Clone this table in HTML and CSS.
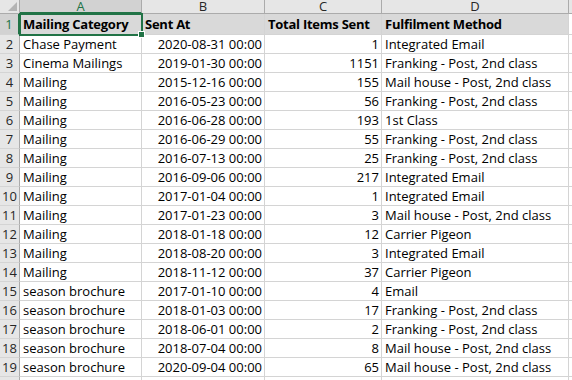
FILE: index.html
```html
<!DOCTYPE html>
<html>
<head>
<meta charset="utf-8">
<link rel="stylesheet" href="styles.css">
</head>
<body>
<div class="sheet">
  <div class="corner"><span class="tri"></span></div>
  <div class="ch sel">A</div><div class="ch">B</div><div class="ch">C</div><div class="ch">D</div><div class="ch"></div>

  <div class="rh sel">1</div>
  <div class="c hd active">Mailing Category<span class="handle"></span></div>
  <div class="c hd">Sent At</div>
  <div class="c hd">Total Items Sent</div>
  <div class="c hd">Fulfilment Method</div>
  <div class="c"></div>

  <div class="rh">2</div><div class="c">Chase Payment</div><div class="c n">2020-08-31 00:00</div><div class="c n">1</div><div class="c">Integrated Email</div><div class="c"></div>
  <div class="rh">3</div><div class="c">Cinema Mailings</div><div class="c n">2019-01-30 00:00</div><div class="c n">1151</div><div class="c">Franking - Post, 2nd class</div><div class="c"></div>
  <div class="rh">4</div><div class="c">Mailing</div><div class="c n">2015-12-16 00:00</div><div class="c n">155</div><div class="c">Mail house - Post, 2nd class</div><div class="c"></div>
  <div class="rh">5</div><div class="c">Mailing</div><div class="c n">2016-05-23 00:00</div><div class="c n">56</div><div class="c">Franking - Post, 2nd class</div><div class="c"></div>
  <div class="rh">6</div><div class="c">Mailing</div><div class="c n">2016-06-28 00:00</div><div class="c n">193</div><div class="c">1st Class</div><div class="c"></div>
  <div class="rh">7</div><div class="c">Mailing</div><div class="c n">2016-06-29 00:00</div><div class="c n">55</div><div class="c">Franking - Post, 2nd class</div><div class="c"></div>
  <div class="rh">8</div><div class="c">Mailing</div><div class="c n">2016-07-13 00:00</div><div class="c n">25</div><div class="c">Franking - Post, 2nd class</div><div class="c"></div>
  <div class="rh">9</div><div class="c">Mailing</div><div class="c n">2016-09-06 00:00</div><div class="c n">217</div><div class="c">Integrated Email</div><div class="c"></div>
  <div class="rh">10</div><div class="c">Mailing</div><div class="c n">2017-01-04 00:00</div><div class="c n">1</div><div class="c">Integrated Email</div><div class="c"></div>
  <div class="rh">11</div><div class="c">Mailing</div><div class="c n">2017-01-23 00:00</div><div class="c n">3</div><div class="c">Mail house - Post, 2nd class</div><div class="c"></div>
  <div class="rh">12</div><div class="c">Mailing</div><div class="c n">2018-01-18 00:00</div><div class="c n">12</div><div class="c">Carrier Pigeon</div><div class="c"></div>
  <div class="rh">13</div><div class="c">Mailing</div><div class="c n">2018-08-20 00:00</div><div class="c n">3</div><div class="c">Integrated Email</div><div class="c"></div>
  <div class="rh">14</div><div class="c">Mailing</div><div class="c n">2018-11-12 00:00</div><div class="c n">37</div><div class="c">Carrier Pigeon</div><div class="c"></div>
  <div class="rh">15</div><div class="c">season brochure</div><div class="c n">2017-01-10 00:00</div><div class="c n">4</div><div class="c">Email</div><div class="c"></div>
  <div class="rh">16</div><div class="c">season brochure</div><div class="c n">2018-01-03 00:00</div><div class="c n">17</div><div class="c">Franking - Post, 2nd class</div><div class="c"></div>
  <div class="rh">17</div><div class="c">season brochure</div><div class="c n">2018-06-01 00:00</div><div class="c n">2</div><div class="c">Franking - Post, 2nd class</div><div class="c"></div>
  <div class="rh">18</div><div class="c">season brochure</div><div class="c n">2018-07-04 00:00</div><div class="c n">8</div><div class="c">Mail house - Post, 2nd class</div><div class="c"></div>
  <div class="rh">19</div><div class="c">season brochure</div><div class="c n">2020-09-04 00:00</div><div class="c n">65</div><div class="c">Mail house - Post, 2nd class</div><div class="c"></div>
  <div class="rh">20</div><div class="c"></div><div class="c"></div><div class="c"></div><div class="c"></div><div class="c"></div>
</div>
</body>
</html>
```
FILE: styles.css
```css
html, body {
  margin: 0;
  padding: 0;
  background: #ffffff;
  overflow: hidden;
}

.sheet {
  display: grid;
  grid-template-columns: 20px 122px 123px 117px 187px 1fr;
  grid-template-rows: 14px 21px repeat(19, 19px);
  width: 100%;
  font-family: "Open Sans", Lato, "Liberation Sans", sans-serif;
  font-size: 13px;
  color: #000000;
}

.corner, .ch, .rh, .c {
  box-sizing: border-box;
  border-right: 1px solid #d4d4d4;
  border-bottom: 1px solid #d4d4d4;
  white-space: nowrap;
  overflow: visible;
}

.corner {
  background: #e6e6e6;
  border-color: #ababab;
  position: relative;
}
.tri {
  position: absolute;
  right: 2px;
  bottom: 2px;
  width: 0;
  height: 0;
  border-left: 9px solid transparent;
  border-bottom: 9px solid #b4b4b4;
}

.ch {
  background: #e6e6e6;
  border-right-color: #ababab;
  border-bottom-color: #ababab;
  color: #262626;
  text-align: center;
  font-size: 13px;
  line-height: 12px;
}
.ch.sel {
  background: #d2d2d2;
  color: #217346;
  border-bottom: 2px solid #217346;
}

.rh {
  background: #e6e6e6;
  border-right-color: #ababab;
  border-bottom-color: #d4d4d4;
  color: #262626;
  text-align: center;
  line-height: 18px;
}
.rh.sel {
  background: #d2d2d2;
  color: #217346;
  border-right: 2px solid #217346;
  line-height: 20px;
}

.c {
  padding: 0 2px 0 3px;
  line-height: 18px;
  overflow: hidden;
}
.c.n {
  text-align: right;
}
.c.hd {
  background: #d9d9d9;
  font-weight: bold;
  letter-spacing: -0.25px;
  line-height: 20px;
  overflow: visible;
}

.active {
  position: relative;
  outline: 2px solid #217346;
  outline-offset: -1px;
  z-index: 2;
}
.handle {
  position: absolute;
  right: -4px;
  bottom: -4px;
  width: 5px;
  height: 5px;
  background: #217346;
  border: 1px solid #ffffff;
}
```
